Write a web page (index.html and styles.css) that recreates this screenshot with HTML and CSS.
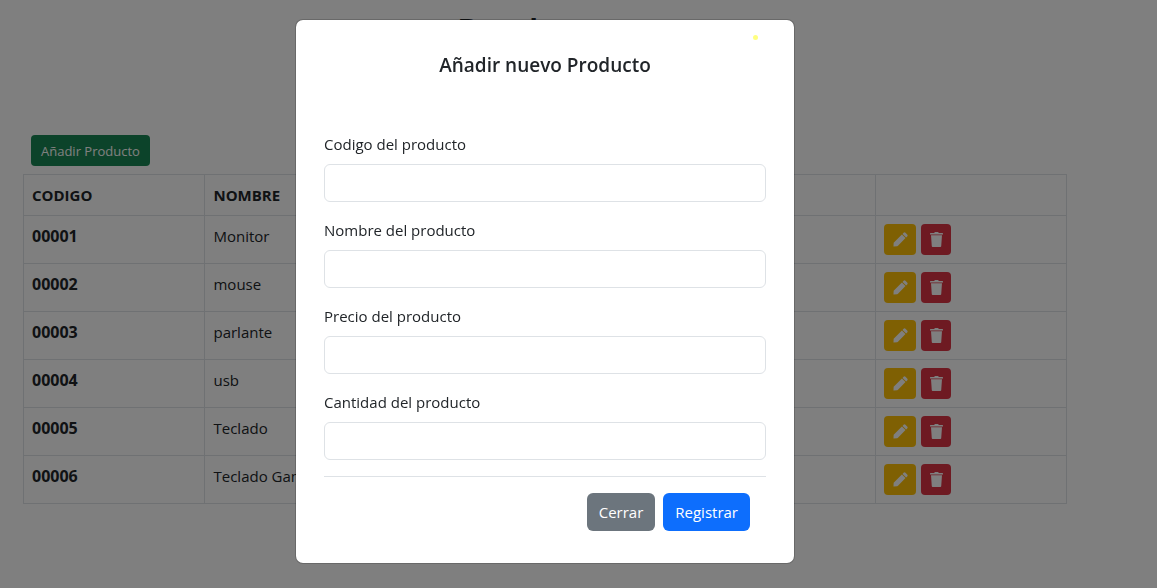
FILE: index.html
```html
<!DOCTYPE html>
<html lang="es">
<head>
<meta charset="utf-8">
<meta name="viewport" content="width=device-width, initial-scale=1">
<title>Productos</title>
<link rel="stylesheet" href="styles.css">
</head>
<body>
<svg class="sprite" aria-hidden="true">
  <symbol id="pencil" viewBox="0 0 16 16"><path d="M11.300.900a1.400 1.400 0 0 1 2 0l1.800 1.800a1.400 1.400 0 0 1 0 2L14 5.800 10.200 2zM9.500 2.700l3.800 3.800-8 8.200L4.500 15.200.500 15.500.700 11.500z"/></symbol>
  <symbol id="trash" viewBox="0 0 14 16"><path d="M4.500 1 5 .3A.6.6 0 0 1 5.500 0h3a.6.6 0 0 1 .5.300L9.500 1H13.500a.5.5 0 0 1 .5.5V2.700H0V1.500A.5.5 0 0 1 .5 1zM1.100 3.500h11.800l-.8 11.500a1 1 0 0 1-1 1H2.900a1 1 0 0 1-1-1z"/></symbol>
</svg>
<main class="page">
  <h1 class="page-title">Productos</h1>
  <button class="btn btn-sm btn-success" type="button">Añadir Producto</button>
  <table class="table">
    <colgroup><col class="col-code"><col class="col-name"><col class="col-price"><col class="col-stock"><col class="col-actions"></colgroup>
    <thead>
      <tr><th scope="col">CODIGO</th><th scope="col">NOMBRE</th><th></th><th></th><th></th></tr>
    </thead>
    <tbody>
      <tr><th scope="row">00001</th><td>Monitor</td><td></td><td></td><td><div class="actions"><button class="btn btn-sm btn-warning" type="button" aria-label="Editar"><svg class="pencil"><use href="#pencil"/></svg></button><button class="btn btn-sm btn-danger" type="button" aria-label="Eliminar"><svg class="trash"><use href="#trash"/></svg></button></div></td></tr>
      <tr><th scope="row">00002</th><td>mouse</td><td></td><td></td><td><div class="actions"><button class="btn btn-sm btn-warning" type="button" aria-label="Editar"><svg class="pencil"><use href="#pencil"/></svg></button><button class="btn btn-sm btn-danger" type="button" aria-label="Eliminar"><svg class="trash"><use href="#trash"/></svg></button></div></td></tr>
      <tr><th scope="row">00003</th><td>parlante</td><td></td><td></td><td><div class="actions"><button class="btn btn-sm btn-warning" type="button" aria-label="Editar"><svg class="pencil"><use href="#pencil"/></svg></button><button class="btn btn-sm btn-danger" type="button" aria-label="Eliminar"><svg class="trash"><use href="#trash"/></svg></button></div></td></tr>
      <tr><th scope="row">00004</th><td>usb</td><td></td><td></td><td><div class="actions"><button class="btn btn-sm btn-warning" type="button" aria-label="Editar"><svg class="pencil"><use href="#pencil"/></svg></button><button class="btn btn-sm btn-danger" type="button" aria-label="Eliminar"><svg class="trash"><use href="#trash"/></svg></button></div></td></tr>
      <tr><th scope="row">00005</th><td>Teclado</td><td></td><td></td><td><div class="actions"><button class="btn btn-sm btn-warning" type="button" aria-label="Editar"><svg class="pencil"><use href="#pencil"/></svg></button><button class="btn btn-sm btn-danger" type="button" aria-label="Eliminar"><svg class="trash"><use href="#trash"/></svg></button></div></td></tr>
      <tr><th scope="row">00006</th><td>Teclado Gamer</td><td></td><td></td><td><div class="actions"><button class="btn btn-sm btn-warning" type="button" aria-label="Editar"><svg class="pencil"><use href="#pencil"/></svg></button><button class="btn btn-sm btn-danger" type="button" aria-label="Eliminar"><svg class="trash"><use href="#trash"/></svg></button></div></td></tr>
    </tbody>
  </table>
</main>
<div class="backdrop">
  <section class="modal" role="dialog" aria-modal="true" aria-labelledby="modal-title">
    <span class="marker"></span>
    <h2 class="modal-title" id="modal-title">Añadir nuevo Producto</h2>
    <form class="form">
      <div class="field"><label for="codigo">Codigo del producto</label><input id="codigo" type="text"></div>
      <div class="field"><label for="nombre">Nombre del producto</label><input id="nombre" type="text"></div>
      <div class="field"><label for="precio">Precio del producto</label><input id="precio" type="text"></div>
      <div class="field"><label for="cantidad">Cantidad del producto</label><input id="cantidad" type="text"></div>
      <div class="modal-footer">
        <button class="btn btn-secondary" type="button">Cerrar</button>
        <button class="btn btn-primary" type="button">Registrar</button>
      </div>
    </form>
  </section>
</div>
</body>
</html>
```
FILE: styles.css
```css
*, *::before, *::after { box-sizing: border-box; }
body {
  margin: 0;
  background: #fff;
  color: #212529;
  font: 400 15px/24px "Open Sans", "Noto Sans", sans-serif;
}
.sprite { display: none; }
.page { padding: 8px 90px 24px 23px; }
.page-title {
  margin: 0 0 79px;
  font-size: 36px;
  line-height: 48px;
  font-weight: 600;
  text-align: center;
}
.btn {
  display: inline-flex;
  align-items: center;
  justify-content: center;
  height: 38px;
  padding: 0 12px;
  border: 0;
  border-radius: 6px;
  color: #fff;
  font: inherit;
  cursor: pointer;
}
.btn svg { height: 15px; fill: currentColor; }
.btn-sm { height: 31px; border-radius: 4px; font-size: 13px; }
.btn-success { margin: 0 8px; padding: 0 10px; background: #198754; }
.btn-warning { width: 32px; padding: 0; background: #ffc107; }
.btn-danger { width: 30px; padding: 0; background: #dc3545; }
.btn-secondary { background: #6c757d; }
.btn-primary { background: #0d6efd; }
.btn .pencil { width: 15px; }
.btn .trash { width: 13px; }
.table {
  width: 100%;
  margin-top: 8px;
  border-collapse: collapse;
  table-layout: fixed;
}
.table th, .table td {
  padding: 8px;
  border: 1px solid #dee2e6;
  text-align: left;
  vertical-align: top;
}
.table th { font-weight: 700; }
.table tbody th { font-size: 16px; }
.col-code, .col-price { width: 17.4%; }
.col-actions { width: 18.3%; }
.actions { display: flex; gap: 5px; }
.backdrop {
  position: fixed;
  inset: 0;
  display: flex;
  align-items: flex-start;
  justify-content: center;
  padding: 19px 67px 0 0;
  background: rgba(0, 0, 0, .5);
}
.modal {
  position: relative;
  width: 100%;
  max-width: 500px;
  padding: 30px 28px 32px;
  border: 1px solid rgba(0, 0, 0, .175);
  border-radius: 8px;
  background: #fff;
  background-clip: padding-box;
}
.marker {
  position: absolute;
  top: 15px;
  right: 36px;
  width: 5px;
  height: 5px;
  border-radius: 50%;
  background: #ffff80;
}
.modal-title {
  margin: 0 0 52px;
  font-size: 19px;
  line-height: 30px;
  font-weight: 600;
  text-align: center;
}
.form { display: grid; gap: 16px; }
.field { display: grid; gap: 8px; }
.field input {
  width: 100%;
  height: 38px;
  padding: 6px 12px;
  border: 1px solid #dee2e6;
  border-radius: 6px;
  background: #fff;
  color: inherit;
  font: inherit;
}
.modal-footer {
  display: flex;
  justify-content: flex-end;
  gap: 8px;
  padding: 16px 16px 0;
  border-top: 1px solid #dee2e6;
}
```
